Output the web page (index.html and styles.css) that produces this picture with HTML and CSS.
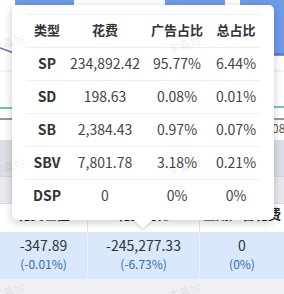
FILE: index.html
```html
<!DOCTYPE html>
<html lang="zh">
<head>
<meta charset="utf-8">
<title>花费占比</title>
<link rel="stylesheet" href="styles.css">
</head>
<body>
<div class="page">
  <div class="chart">
    <svg class="chart-svg" width="284" height="140" viewBox="0 0 284 140">
      <rect x="15" y="0" width="59" height="140" fill="#6e9bea"/>
      <rect x="165" y="0" width="60" height="30" fill="#6e9bea"/>
      <rect x="240" y="0" width="44" height="56" fill="#6e9bea"/>
      <line x1="0" y1="71" x2="284" y2="71" stroke="#e6e6e6" stroke-width="1"/>
      <polyline points="0,48 14,53 140,55 284,54" fill="none" stroke="#7a66c7" stroke-width="1.5"/>
      <polyline points="0,108 284,107" fill="none" stroke="#3bb2a4" stroke-width="1.5"/>
      <line x1="0" y1="119" x2="284" y2="119" stroke="#333" stroke-width="1"/>
      <text x="272" y="133" class="axis-label">08</text>
    </svg>
  </div>
  <div class="band band-a"></div>
  <div class="band band-b"></div>
  <div class="thead">
    <div class="hc">花费差值</div>
    <div class="hc">花费变化</div>
    <div class="hc">上期广告花费</div>
  </div>
  <div class="trow">
    <div class="tc"><div class="num">-347.89</div><div class="pct">(-0.01%)</div></div>
    <div class="tc"><div class="num">-245,277.33</div><div class="pct">(-6.73%)</div></div>
    <div class="tc"><div class="num">0</div><div class="pct">(0%)</div></div>
  </div>
  <div class="tfoot"></div>

  <div class="tip">
    <table class="tip-table">
      <colgroup><col class="w1"><col class="w2"><col class="w3"><col class="w4"></colgroup>
      <thead>
        <tr><th>类型</th><th>花费</th><th>广告占比</th><th>总占比</th></tr>
      </thead>
      <tbody>
        <tr><td class="type">SP</td><td>234,892.42</td><td>95.77%</td><td>6.44%</td></tr>
        <tr><td class="type">SD</td><td>198.63</td><td>0.08%</td><td>0.01%</td></tr>
        <tr><td class="type">SB</td><td>2,384.43</td><td>0.97%</td><td>0.07%</td></tr>
        <tr><td class="type">SBV</td><td>7,801.78</td><td>3.18%</td><td>0.21%</td></tr>
        <tr><td class="type">DSP</td><td>0</td><td>0%</td><td>0%</td></tr>
      </tbody>
    </table>
    <div class="tip-arrow"></div>
  </div>

  <div class="wm wm1">李嘉怡</div>
  <div class="wm wm2">李嘉怡</div>
  <div class="wm wm3">李嘉怡</div>
  <div class="wm wm4">李嘉怡</div>
  <div class="wm wm5">李嘉怡</div>
  <div class="wm wm6">李嘉怡</div>
</div>
</body>
</html>
```
FILE: styles.css
```css
html, body {
  margin: 0;
  padding: 0;
  background: #fff;
}
body {
  font-family: "Noto Sans CJK SC", "Noto Sans", sans-serif;
  color: #333;
}
.page {
  position: relative;
  width: 284px;
  height: 294px;
  overflow: hidden;
  display: flex;
  flex-direction: column;
}
.chart {
  height: 140px;
  flex: none;
}
.chart-svg {
  display: block;
}
.axis-label {
  font-family: "Noto Sans CJK SC", sans-serif;
  font-size: 12px;
  fill: #555;
}
.band {
  flex: none;
}
.band-a {
  height: 36px;
  background: #dbdfe6;
  border-bottom: 1px solid #cfd4dc;
}
.band-b {
  height: 26px;
  background: #e7e9ee;
  border-bottom: 1px solid #d7dbe2;
}
.thead {
  flex: none;
  height: 28px;
  display: grid;
  grid-template-columns: 87px 112px 85px;
  background: #fff;
  border-bottom: 1px solid #e3e6eb;
}
.hc {
  font-size: 13px;
  font-weight: 700;
  color: #222;
  text-align: center;
  white-space: nowrap;
  line-height: 16px;
  padding-top: 2px;
}
.hc + .hc {
  border-left: 1px solid #e3e6eb;
}
.trow {
  flex: none;
  height: 46px;
  display: grid;
  grid-template-columns: 87px 112px 85px;
  background: #d9e8fb;
}
.tc {
  text-align: center;
  padding-top: 3px;
}
.tc + .tc {
  border-left: 1px solid #edf3fc;
}
.num {
  font-size: 14px;
  line-height: 19px;
  color: #333;
}
.pct {
  font-size: 12px;
  line-height: 17px;
  color: #2f6db6;
}
.tfoot {
  flex: 1;
  background: #eef0f4;
}

/* tooltip overlay */
.tip {
  position: absolute;
  left: 12px;
  top: 5px;
  width: 234px;
  height: 198px;
  padding: 9px 14px 8px;
  background: #fff;
  border-radius: 5px;
  box-shadow: 0 2px 8px rgba(0, 0, 0, 0.22);
}
.tip-table {
  width: 234px;
  border-collapse: collapse;
  table-layout: fixed;
}
.w1 { width: 42px; }
.w2 { width: 74px; }
.w3 { width: 70px; }
.w4 { width: 48px; }
.tip-table th,
.tip-table td {
  box-sizing: border-box;
  height: 33px;
  padding: 0 0 3px;
  line-height: 16px;
  vertical-align: middle;
  border-top: 1px solid #eeeeee;
  text-align: center;
  white-space: nowrap;
  font-size: 14px;
}
.tip-table th {
  font-size: 13px;
  font-weight: 700;
  color: #333;
}
.tip-table td {
  color: #444;
}
.tip-table td.type {
  font-weight: 700;
  color: #333;
}
.tip-arrow {
  position: absolute;
  left: 122px;
  bottom: -9px;
  width: 0;
  height: 0;
  border-left: 9px solid transparent;
  border-right: 9px solid transparent;
  border-top: 9px solid #fff;
  filter: drop-shadow(0 2px 1px rgba(0, 0, 0, 0.12));
}

/* watermark overlay */
.wm {
  position: absolute;
  font-size: 11px;
  color: rgba(0, 0, 0, 0.09);
  transform: rotate(-18deg);
  white-space: nowrap;
  pointer-events: none;
}
.wm1 { left: -8px; top: 34px; }
.wm2 { left: 168px; top: 36px; }
.wm3 { left: -8px; top: 158px; }
.wm4 { left: 168px; top: 158px; }
.wm5 { left: -8px; top: 283px; }
.wm6 { left: 168px; top: 283px; }
```
